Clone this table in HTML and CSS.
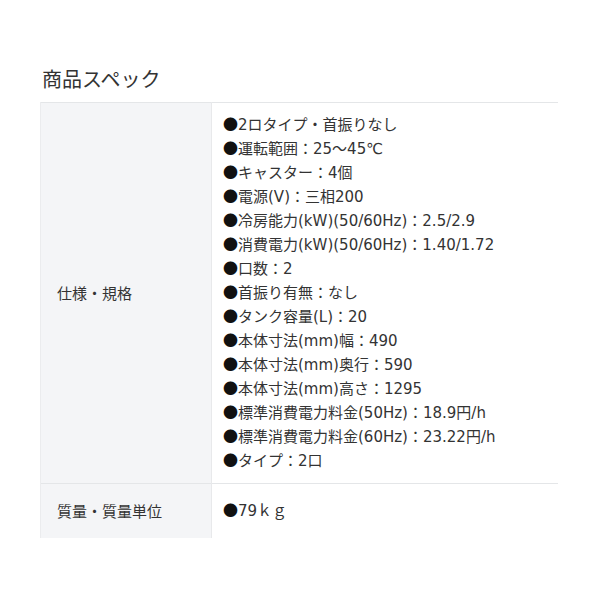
FILE: index.html
```html
<!DOCTYPE html>
<html lang="ja">
<head>
<meta charset="utf-8">
<link rel="stylesheet" href="styles.css">
</head>
<body>
<div class="page">
  <h2 class="title">商品スペック</h2>
  <table class="spec">
    <tr>
      <th>仕様・規格</th>
      <td>
        <div class="item"><span class="dot">●</span>2ロタイプ・首振りなし</div>
        <div class="item"><span class="dot">●</span>運転範囲：25～45℃</div>
        <div class="item"><span class="dot">●</span>キャスター：4個</div>
        <div class="item"><span class="dot">●</span>電源(V)：三相200</div>
        <div class="item"><span class="dot">●</span>冷房能力(kW)(50/60Hz)：2.5/2.9</div>
        <div class="item"><span class="dot">●</span>消費電力(kW)(50/60Hz)：1.40/1.72</div>
        <div class="item"><span class="dot">●</span>口数：2</div>
        <div class="item"><span class="dot">●</span>首振り有無：なし</div>
        <div class="item"><span class="dot">●</span>タンク容量(L)：20</div>
        <div class="item"><span class="dot">●</span>本体寸法(mm)幅：490</div>
        <div class="item"><span class="dot">●</span>本体寸法(mm)奥行：590</div>
        <div class="item"><span class="dot">●</span>本体寸法(mm)高さ：1295</div>
        <div class="item"><span class="dot">●</span>標準消費電力料金(50Hz)：18.9円/h</div>
        <div class="item"><span class="dot">●</span>標準消費電力料金(60Hz)：23.22円/h</div>
        <div class="item"><span class="dot">●</span>タイプ：2口</div>
      </td>
    </tr>
    <tr>
      <th>質量・質量単位</th>
      <td><div class="item"><span class="dot">●</span>79ｋｇ</div></td>
    </tr>
  </table>
</div>
</body>
</html>
```
FILE: styles.css
```css
html, body {
  margin: 0;
  padding: 0;
  background: #fff;
}
body {
  font-family: "Noto Sans CJK JP", sans-serif;
  color: #333;
}
.page {
  padding: 64px 42px 0 40px;
}
.title {
  margin: 0 0 8px 2px;
  font-size: 20px;
  font-weight: normal;
  line-height: 30px;
  color: #333;
}
.spec {
  width: 518px;
  border-collapse: collapse;
  border-top: 1px solid #e4e6e8;
}
.spec th {
  width: 171px;
  box-sizing: border-box;
  background: #f4f5f7;
  text-align: left;
  font-weight: normal;
  font-size: 15px;
  line-height: 24px;
  padding: 15px 16px;
  vertical-align: middle;
  border-left: 1px solid #ebecee;
  border-right: 1px solid #e8e9eb;
  color: #333;
}
.spec td {
  font-family: "DejaVu Sans", "Noto Sans CJK JP", sans-serif;
  font-size: 15px;
  line-height: 24px;
  padding: 10px 11px;
  vertical-align: middle;
  color: #333;
}
.spec .item {
  height: 24px;
  white-space: nowrap;
}
.spec .dot {
  font-family: "Noto Sans CJK JP", sans-serif;
  line-height: 1;
  color: #111;
}
.spec tr + tr th,
.spec tr + tr td {
  border-top: 1px solid #e4e6e8;
  padding-top: 15px;
  padding-bottom: 15px;
}
```
